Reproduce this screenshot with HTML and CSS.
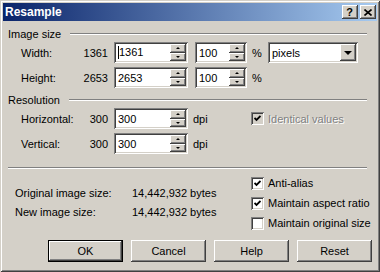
FILE: index.html
```html
<!DOCTYPE html>
<html lang="en">
<head>
    <meta charset="UTF-8">
    <title>Resample</title>
    <link rel="stylesheet" href="styles.css">
</head>
<body>
    <div class="window">
        <div class="titlebar">
            <span class="title">Resample</span>
            <div class="caption-buttons">
                <div class="cap-btn">?</div>
                <div class="cap-btn">
                    <svg width="8" height="7" viewBox="0 0 8 7"><path d="M0.5 0.5 L7.5 6.5 M7.5 0.5 L0.5 6.5" stroke="#000" stroke-width="1.6" fill="none"/></svg>
                </div>
            </div>
        </div>

        <div class="content">
            <div class="group-head"><span>Image size</span><div class="etch"></div></div>
            <div class="grid size-grid">
                <span>Width:</span><span class="orig">1361</span>
                <div class="field w-main">
                    <span class="val"><i class="caret"></i>1361</span>
                    <div class="spinner">
                        <div class="spin-btn"><span class="arr-up"></span></div>
                        <div class="spin-btn"><span class="arr-down"></span></div>
                    </div>
                </div>
                <div class="field w-pct">
                    <span class="val">100</span>
                    <div class="spinner">
                        <div class="spin-btn"><span class="arr-up"></span></div>
                        <div class="spin-btn"><span class="arr-down"></span></div>
                    </div>
                </div>
                <span class="unit">%</span>
                <div class="field combo">
                    <span class="val">pixels</span>
                    <div class="drop-btn"><span class="arr-big"></span></div>
                </div>

                <span>Height:</span><span class="orig">2653</span>
                <div class="field w-main">
                    <span class="val">2653</span>
                    <div class="spinner">
                        <div class="spin-btn"><span class="arr-up"></span></div>
                        <div class="spin-btn"><span class="arr-down"></span></div>
                    </div>
                </div>
                <div class="field w-pct">
                    <span class="val">100</span>
                    <div class="spinner">
                        <div class="spin-btn"><span class="arr-up"></span></div>
                        <div class="spin-btn"><span class="arr-down"></span></div>
                    </div>
                </div>
                <span class="unit">%</span>
                <span></span>
            </div>

            <div class="group-head res-head"><span>Resolution</span><div class="etch"></div></div>
            <div class="grid res-grid">
                <span>Horizontal:</span><span class="orig">300</span>
                <div class="field w-main">
                    <span class="val">300</span>
                    <div class="spinner">
                        <div class="spin-btn"><span class="arr-up"></span></div>
                        <div class="spin-btn"><span class="arr-down"></span></div>
                    </div>
                </div>
                <span class="unit">dpi</span>
                <div class="check-row disabled">
                    <div class="checkbox gray">
                        <svg width="7" height="7" viewBox="0 0 7 7"><path d="M0.5 3 L2.5 5 L6.5 1" stroke="#000" stroke-width="1.8" fill="none"/></svg>
                    </div>
                    <span>Identical values</span>
                </div>

                <span>Vertical:</span><span class="orig">300</span>
                <div class="field w-main">
                    <span class="val">300</span>
                    <div class="spinner">
                        <div class="spin-btn"><span class="arr-up"></span></div>
                        <div class="spin-btn"><span class="arr-down"></span></div>
                    </div>
                </div>
                <span class="unit">dpi</span>
                <span></span>
            </div>

            <div class="separator"></div>

            <div class="bottom">
                <div class="info-col">
                    <div class="info"><span>Original image size:</span><span>14,442,932 bytes</span></div>
                    <div class="info"><span>New image size:</span><span>14,442,932 bytes</span></div>
                </div>
                <div class="check-col">
                    <div class="check-row">
                        <div class="checkbox">
                            <svg width="7" height="7" viewBox="0 0 7 7"><path d="M0.5 3 L2.5 5 L6.5 1" stroke="#000" stroke-width="1.8" fill="none"/></svg>
                        </div>
                        <span>Anti-alias</span>
                    </div>
                    <div class="check-row">
                        <div class="checkbox">
                            <svg width="7" height="7" viewBox="0 0 7 7"><path d="M0.5 3 L2.5 5 L6.5 1" stroke="#000" stroke-width="1.8" fill="none"/></svg>
                        </div>
                        <span>Maintain aspect ratio</span>
                    </div>
                    <div class="check-row">
                        <div class="checkbox"></div>
                        <span>Maintain original size</span>
                    </div>
                </div>
            </div>

            <div class="buttons">
                <div class="btn default">OK</div>
                <div class="btn">Cancel</div>
                <div class="btn">Help</div>
                <div class="btn">Reset</div>
            </div>
        </div>
    </div>
</body>
</html>
```

FILE: styles.css
```css
body {
    margin: 0;
    background: #d4d0c8;
    font-family: "Liberation Sans", Arial, sans-serif;
    font-size: 11px;
    color: #000;
}
.window {
    width: 380px;
    height: 272px;
    box-sizing: border-box;
    padding: 3px;
    box-shadow: inset 1px 1px #d4d0c8, inset -1px -1px #404040,
                inset 2px 2px #fff, inset -2px -2px #808080;
    display: flex;
    flex-direction: column;
}
.titlebar {
    height: 18px;
    background: linear-gradient(to right, #0a246a, #a6caf0);
    display: flex;
    align-items: center;
    justify-content: space-between;
    padding: 0 1px 0 2px;
}
.title {
    color: #fff;
    font-weight: bold;
    font-size: 12px;
}
.caption-buttons {
    display: flex;
    gap: 2px;
}
.cap-btn {
    width: 16px;
    height: 14px;
    box-sizing: border-box;
    background: #d4d0c8;
    box-shadow: inset -1px -1px #404040, inset 1px 1px #fff,
                inset -2px -2px #808080, inset 2px 2px #d4d0c8;
    display: flex;
    align-items: center;
    justify-content: center;
    font-weight: bold;
    font-size: 11px;
    padding-right: 1px;
}

.content {
    padding: 6px 5px 0 5px;
}
.group-head {
    display: flex;
    align-items: center;
    gap: 9px;
    height: 14px;
    margin-right: 5px;
}
.res-head {
    margin-top: 5px;
}
.etch {
    flex: 1;
    border-top: 1px solid #808080;
    border-bottom: 1px solid #fff;
}

.grid {
    display: grid;
    grid-auto-rows: 21px;
    row-gap: 4px;
    align-items: center;
    padding-left: 13px;
    margin-top: 1px;
}
.size-grid {
    grid-template-columns: 62px 25px 80px 59px 15px 96px;
}
.res-grid {
    grid-template-columns: 62px 25px 80px 63px auto;
}
.orig {
    text-align: right;
}
.unit {
    padding-left: 5px;
}

.field {
    height: 21px;
    box-sizing: border-box;
    padding: 2px;
    background: #fff;
    box-shadow: inset 1px 1px #808080, inset -1px -1px #fff,
                inset 2px 2px #404040, inset -2px -2px #d4d0c8;
    display: flex;
    align-items: center;
    justify-self: end;
}
.w-main { width: 74px; }
.w-pct { width: 52px; }
.combo { width: 90px; }
.val {
    flex: 1;
    padding-left: 2px;
    white-space: nowrap;
}
.caret {
    display: inline-block;
    width: 1px;
    height: 13px;
    background: #000;
    vertical-align: -3px;
}
.spinner {
    width: 16px;
    align-self: stretch;
    display: flex;
    flex-direction: column;
}
.spin-btn, .drop-btn {
    flex: 1;
    background: #d4d0c8;
    box-shadow: inset -1px -1px #404040, inset 1px 1px #fff,
                inset -2px -2px #808080, inset 2px 2px #d4d0c8;
    display: flex;
    align-items: center;
    justify-content: center;
}
.drop-btn {
    flex: none;
    width: 16px;
    align-self: stretch;
}
.arr-up, .arr-down, .arr-big {
    width: 0;
    height: 0;
    border-left: 2px solid transparent;
    border-right: 2px solid transparent;
}
.arr-up { border-bottom: 2px solid #000; }
.arr-down { border-top: 2px solid #000; }
.arr-big {
    border-left-width: 4px;
    border-right-width: 4px;
    border-top: 4px solid #000;
}

.check-row {
    display: flex;
    align-items: center;
    gap: 4px;
    height: 20px;
}
.checkbox {
    width: 13px;
    height: 13px;
    box-sizing: border-box;
    background: #fff;
    box-shadow: inset 1px 1px #808080, inset -1px -1px #fff,
                inset 2px 2px #404040, inset -2px -2px #d4d0c8;
    display: flex;
    align-items: center;
    justify-content: center;
}
.checkbox.gray {
    background: #d4d0c8;
}
.disabled span {
    color: #808080;
    text-shadow: 1px 1px 0 #fff;
}

.separator {
    margin: 13px 5px 0 0;
    border-top: 1px solid #808080;
    border-bottom: 1px solid #fff;
}
.bottom {
    display: grid;
    grid-template-columns: 243px auto;
    margin-top: 4px;
}
.info-col {
    padding: 10px 0 0 7px;
}
.info {
    display: grid;
    grid-template-columns: 117px auto;
    height: 19px;
    align-items: center;
}

.buttons {
    display: flex;
    justify-content: flex-end;
    gap: 8px;
    margin-top: 7px;
}
.btn {
    width: 75px;
    height: 22px;
    box-sizing: border-box;
    box-shadow: inset -1px -1px #404040, inset 1px 1px #fff,
                inset -2px -2px #808080, inset 2px 2px #d4d0c8;
    display: flex;
    align-items: center;
    justify-content: center;
}
.btn.default {
    border: 1px solid #000;
}
```
